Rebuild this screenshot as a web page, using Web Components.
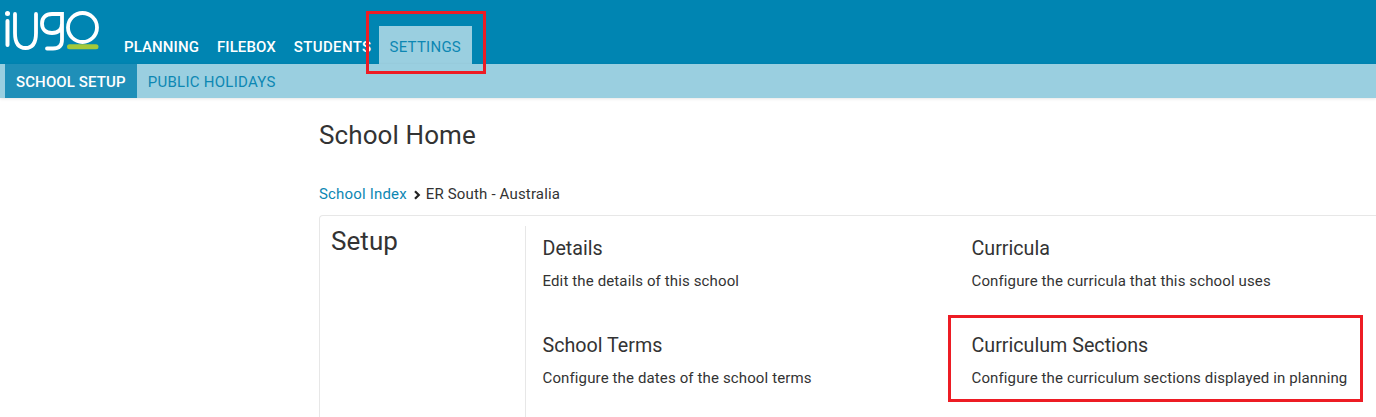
<!DOCTYPE html>
<html lang="en"><head><meta charset="utf-8"><title>School Home</title>
<style>
html,body{margin:0;padding:0;height:417px;overflow:hidden;background:#fff}
body{font-family:Roboto,"Liberation Sans",sans-serif;color:#333;position:relative}
.mark{position:absolute;border:3px solid #ed1c24;box-sizing:border-box;pointer-events:none}
</style></head><body>
<template id="t-bar"><style>
:host{display:flex;height:64px;background:#0085b2;align-items:flex-end}
svg{display:block;width:110px;height:60px;flex:none;align-self:flex-start}
nav{display:flex;padding-left:5px;align-items:flex-end}
</style>
<svg viewBox="0 0 110 60" fill="none" stroke="#fff" stroke-linecap="round" aria-label="iUgo logo">
<path d="M7.500 13.500h.01" stroke-width="5"/>
<path d="M7.500 21v24" stroke-width="4"/>
<path d="M15 14v19c0 10 4 15 10.500 15S36 43 36 33V14" stroke-width="3.800"/>
<path d="M62 14H52c-6.500 0-10 4-10 9.500S45.500 33 52 33s10-4 10-9.500V14zM62 24v16c0 6-3.500 8.500-9 8.500h-6" stroke-width="3.800"/>
<circle cx="82.500" cy="27.500" r="14.500" stroke-width="3.800"/>
<path d="M69.500 46.800H96" stroke="#a4c93a" stroke-width="5"/>
</svg><nav><slot></slot></nav></template>
<template id="t-tab"><style>
:host{display:block;font-size:15px;letter-spacing:.1px;font-weight:500;line-height:16px;color:#fff;padding:0 9px 9px;white-space:nowrap}
:host([wide]){letter-spacing:.35px}
:host([active]){background:#9acfe0;color:#0d87b3;font-weight:400;padding:13px 11px 9px;letter-spacing:.25px;margin-left:-2px}
</style><slot></slot></template>
<template id="t-sub"><style>
:host{display:flex;height:34px;background:#9acfe0;padding-left:5px;box-shadow:0 1px 3px rgba(0,0,0,.1);position:relative}
</style><slot></slot></template>
<template id="t-subtab"><style>
:host{display:block;font-size:15px;letter-spacing:.12px;font-weight:500;line-height:36px;height:34px;color:#fff;background:#1f8fb8;padding:0 11px;white-space:nowrap}
:host([plain]){background:none;color:#0d87b3;font-weight:400;letter-spacing:.27px}
</style><slot></slot></template>
<template id="t-main"><style>
:host{display:block;padding:0 0 0 319px}
h1{font-size:26px;letter-spacing:.1px;font-weight:400;line-height:28px;margin:0;padding-top:23px;color:#333}
</style><h1><slot name="title"></slot></h1><slot></slot></template>
<template id="t-crumb"><style>
:host{display:flex;align-items:center;font-size:15px;letter-spacing:.17px;line-height:20px;margin-top:35px;color:#333;height:20px}
span{color:#0d87b3}
svg{width:8px;height:10px;margin:1px 5px 0 6px;display:block}
</style><span>School Index</span><svg viewBox="0 0 8 10"><path d="M2 1.200 5.800 5 2 8.800" fill="none" stroke="#222" stroke-width="2.200"/></svg><slot></slot></template>
<template id="t-panel"><style>
:host{display:flex;margin-top:11px;border:1px solid #e7e7e7;border-right:0;border-bottom:0;border-radius:4px 0 0 0;height:220px;box-sizing:border-box;padding:10px 0 0 11px}
h2{font-size:26px;letter-spacing:.05px;font-weight:400;line-height:30px;margin:0;width:194px;flex:none;color:#333}
.g{border-left:1px solid #e7e7e7;padding:11px 0 0 16.500px;display:grid;grid-template-columns:429px 400px;grid-auto-rows:97px;flex:1;align-content:start}
</style><h2><slot name="title"></slot></h2><div class="g"><slot></slot></div></template>
<template id="t-item"><style>
:host{display:block}
h3{font-size:19.700px;font-weight:400;line-height:24px;margin:0;color:#333}
p{font-size:15px;letter-spacing:.13px;line-height:20px;margin:10px 0 0;color:#333;white-space:nowrap}
</style><h3><slot name="h"></slot></h3><p><slot></slot></p></template>

<iugo-bar><iugo-tab>PLANNING</iugo-tab><iugo-tab>FILEBOX</iugo-tab><iugo-tab wide>STUDENTS</iugo-tab><iugo-tab active>SETTINGS</iugo-tab></iugo-bar>
<iugo-sub><iugo-subtab>SCHOOL SETUP</iugo-subtab><iugo-subtab plain>PUBLIC HOLIDAYS</iugo-subtab></iugo-sub>
<iugo-main><span slot="title">School Home</span>
<iugo-crumb>ER South - Australia</iugo-crumb>
<iugo-panel><span slot="title">Setup</span>
<iugo-item><span slot="h">Details</span>Edit the details of this school</iugo-item>
<iugo-item><span slot="h">Curricula</span>Configure the curricula that this school uses</iugo-item>
<iugo-item><span slot="h">School Terms</span>Configure the dates of the school terms</iugo-item>
<iugo-item><span slot="h">Curriculum Sections</span>Configure the curriculum sections displayed in planning</iugo-item>
</iugo-panel></iugo-main>
<div class="mark" style="left:366px;top:11px;width:120px;height:63px"></div>
<div class="mark" style="left:948px;top:315px;width:415px;height:87px"></div>
<script>
for(const [n,t] of [['iugo-bar','t-bar'],['iugo-tab','t-tab'],['iugo-sub','t-sub'],['iugo-subtab','t-subtab'],['iugo-main','t-main'],['iugo-crumb','t-crumb'],['iugo-panel','t-panel'],['iugo-item','t-item']]){
customElements.define(n,class extends HTMLElement{constructor(){super();this.attachShadow({mode:'open'}).appendChild(document.getElementById(t).content.cloneNode(true));}});
}
</script>
</body></html>
